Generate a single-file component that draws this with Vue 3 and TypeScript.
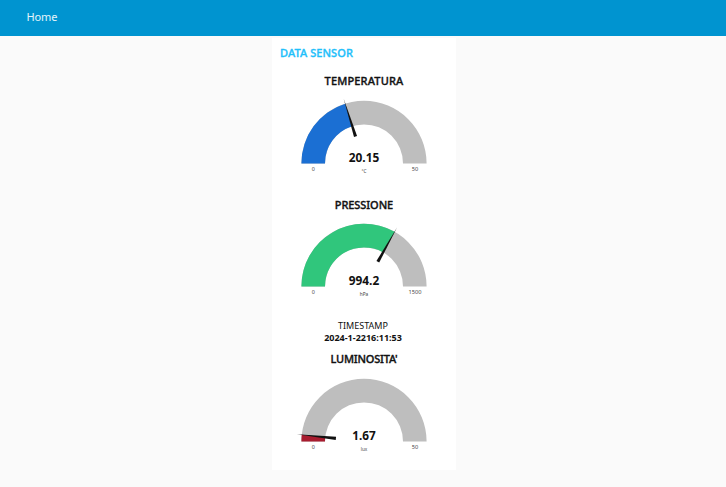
<script setup lang="ts">
interface Gauge {
  id: string
  title: string
  value: number
  max: number
  unit: string
  color: string
  valueWidth: number
  unitWidth: number
  maxWidth: number
}

const gauges: Gauge[] = [
  { id: 'temperatura', title: 'TEMPERATURA', value: 20.15, max: 50, unit: '°C', color: '#1b6fd3', valueWidth: 30.5, unitWidth: 5, maxWidth: 6.5 },
  { id: 'pressione', title: 'PRESSIONE', value: 994.2, max: 1500, unit: 'hPa', color: '#30c67c', valueWidth: 30.5, unitWidth: 8.5, maxWidth: 13 },
  { id: 'luminosita', title: "LUMINOSITA'", value: 1.67, max: 50, unit: 'lux', color: '#a81c2f', valueWidth: 23.5, unitWidth: 6.5, maxWidth: 6.5 },
]

const CX = 92
const CY = 68.4
const OUTER = 62.6
const INNER = 39

function angle(g: Gauge): number {
  return Math.PI * (1 - g.value / g.max)
}

function point(r: number, a: number): string {
  return `${(CX + r * Math.cos(a)).toFixed(2)} ${(CY - r * Math.sin(a)).toFixed(2)}`
}

function band(end: number): string {
  return `M${point(OUTER, Math.PI)}A${OUTER} ${OUTER} 0 0 1 ${point(OUTER, end)}L${point(INNER, end)}A${INNER} ${INNER} 0 0 0 ${point(INNER, Math.PI)}Z`
}

function needle(g: Gauge): string {
  const a = angle(g)
  const spread = 1.6 / 28.3
  return `M${point(67.5, a)}L${point(28.3, a + spread)}L${point(28.3, a - spread)}Z`
}
</script>

<template>
  <div class="page">
    <header class="bar"><a class="home">Home</a></header>
    <main class="card">
      <h1 class="heading">DATA SENSOR</h1>
      <section v-for="g in gauges" :key="g.id" class="sensor" :class="g.id">
        <div v-if="g.id === 'luminosita'" class="stamp">
          <div class="stamp-label">TIMESTAMP</div>
          <div class="stamp-value">2024-1-2216:11:53</div>
        </div>
        <h2 class="title">{{ g.title }}</h2>
        <svg class="gauge" width="184" height="86" viewBox="0 0 184 86">
          <path :d="band(0)" fill="#bebebe" />
          <path :d="band(angle(g))" :fill="g.color" />
          <path :d="needle(g)" fill="#111" />
          <text class="value" x="92" y="66.8" :textLength="g.valueWidth" lengthAdjust="spacingAndGlyphs">{{ g.value }}</text>
          <text class="small" x="41.2" y="76">0</text>
          <text class="small" x="92" y="78" :textLength="g.unitWidth" lengthAdjust="spacingAndGlyphs">{{ g.unit }}</text>
          <text class="small" x="143" y="76" :textLength="g.maxWidth" lengthAdjust="spacingAndGlyphs">{{ g.max }}</text>
        </svg>
      </section>
    </main>
  </div>
</template>

<style>
body {
  background: #fafafa;
}
</style>

<style scoped>
.page {
  display: flex;
  flex-direction: column;
  min-height: 487px;
  background: #fafafa;
  color: #111;
  font-family: "Noto Sans", "Open Sans", sans-serif;
}
.bar {
  box-sizing: border-box;
  height: 36px;
  padding: 9px 26.4px;
  background: #0094d0;
}
.home {
  display: block;
  color: #e4f4fb;
  font-size: 11px;
  line-height: 16px;
  letter-spacing: -0.1px;
}
.card {
  box-sizing: border-box;
  width: 184px;
  height: 432px;
  margin: 2px 0 0 272px;
  padding-top: 7px;
  background: #fff;
}
.heading {
  margin: 0;
  padding-left: 8px;
  color: #1fc0fa;
  font-size: 11px;
  font-weight: 500;
  line-height: 16px;
  letter-spacing: 0.08px;
  -webkit-text-stroke: 0.35px currentColor;
}
.sensor {
  display: flex;
  flex-direction: column;
  align-items: center;
  text-align: center;
}
.temperatura {
  padding-top: 12px;
}
.pressione {
  padding-top: 16px;
}
.luminosita {
  padding-top: 16px;
}
.title {
  margin: 0;
  font-size: 11px;
  font-weight: 500;
  line-height: 16px;
  -webkit-text-stroke: 0.35px currentColor;
}
.temperatura .title {
  letter-spacing: 0.16px;
}
.pressione .title {
  letter-spacing: -0.08px;
}
.luminosita .title {
  letter-spacing: -0.22px;
}
.gauge {
  display: block;
  margin-top: 6px;
}
.pressione .gauge {
  margin-top: 5px;
}
.stamp {
  margin-bottom: 7px;
  padding-right: 2px;
  line-height: 12px;
}
.stamp-label {
  font-size: 9px;
}
.stamp-value {
  font-size: 9px;
  font-weight: 700;
}
.value {
  fill: #111;
  font-size: 12.8px;
  font-weight: 700;
  text-anchor: middle;
}
.small {
  fill: #444;
  font-size: 5.4px;
  text-anchor: middle;
}
</style>
